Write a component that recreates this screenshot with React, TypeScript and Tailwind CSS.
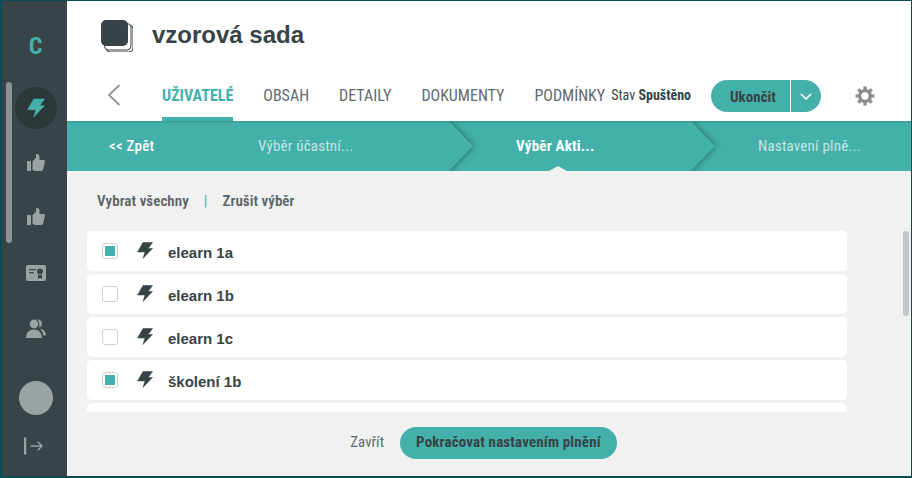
const Bolt = ({ className }: { className: string }) => (
  <svg viewBox="0 0 16 17" className={className} fill="currentColor" stroke="currentColor" strokeWidth="0.5" strokeLinejoin="round">
    <path d="M6 0.5 H15.5 L11.2 6.5 H15.5 L6 16.5 L8 10 H0.5 Z" />
  </svg>
);

const Thumb = () => (
  <svg viewBox="0 0 18 17" className="w-[18px] h-[17px]" fill="currentColor">
    <rect x="0" y="7" width="4" height="10" rx="0.5" />
    <path d="M5.5 7.5 L9 3.5 V0.6 Q9 0 10 0 Q12.5 0 12.5 3 V6 H17 Q18 6 18 7.5 L16 15.5 Q15.7 17 14 17 H8 L5.5 16 Z" />
  </svg>
);

const Certificate = () => (
  <svg viewBox="0 0 20 16" className="w-5 h-4" fill="currentColor">
    <path
      fillRule="evenodd"
      d="M2 0 H18 A2 2 0 0 1 20 2 V14 A2 2 0 0 1 18 16 H2 A2 2 0 0 1 0 14 V2 A2 2 0 0 1 2 0 Z M3 4 V5.2 H10 V4 Z M3 7 V8.2 H8 V7 Z M14 3.5 A3 3 0 1 0 14 9.5 A3 3 0 1 0 14 3.5 Z M12 10 V14 L14 13 L16 14 V10 Z"
    />
  </svg>
);

const Users = () => (
  <svg viewBox="0 0 20 19" className="w-5 h-[19px]" fill="currentColor">
    <circle cx="8" cy="5" r="4.4" />
    <path d="M0 19 Q0 10.5 8 10.5 Q15.5 10.5 16 19 Z" />
    <path d="M11.5 0.6 A3.6 3.6 0 0 1 15.8 4.6 A3.6 3.6 0 0 1 13 8.6 Q13.6 6 13.2 4 Q12.8 2 11.5 0.6 Z" />
    <path d="M14.2 9.8 Q19.6 10.5 20 16.5 H17.4 Q16.8 12.4 14.2 9.8 Z" />
  </svg>
);

const Gear = () => (
  <svg viewBox="0 0 20 20" className="ml-[34px] mt-[15px] w-[20px] h-[20px] text-[#8d8d8d]" fill="none" stroke="currentColor">
    <circle cx="10" cy="10" r="5.4" strokeWidth="3.4" />
    <path d="M10 0.5 V4 M10 16 V19.5 M0.5 10 H4 M16 10 H19.5 M3.3 3.3 L5.7 5.7 M14.3 14.3 L16.7 16.7 M16.7 3.3 L14.3 5.7 M5.7 14.3 L3.3 16.7" strokeWidth="3.2" />
  </svg>
);

const StepArrow = ({ className }: { className: string }) => (
  <svg className={`absolute top-0 w-[50px] h-[50px] ${className}`} viewBox="0 0 50 50">
    <path
      d="M-10 -1 L0 -1 L25 25 L0 51 L-10 51 Z"
      fill="#44b0aa"
      className="[filter:drop-shadow(1px_0_3px_rgba(10,60,60,0.55))]"
    />
  </svg>
);

const SideItem = ({ children, className }: { children: React.ReactNode; className: string }) => (
  <div className={`flex justify-center items-center text-[#9aa2a4] ${className}`}>{children}</div>
);

const Step = ({ label, className }: { label: string; className: string }) => (
  <span className={`relative text-[15px] tracking-[0.2px] ${className}`}>{label}</span>
);

const rows = [
  { name: "elearn 1a", checked: true },
  { name: "elearn 1b", checked: false },
  { name: "elearn 1c", checked: false },
  { name: "školení 1b", checked: true },
];

const tabs = ["OBSAH", "DETAILY", "DOKUMENTY", "PODMÍNKY"];

const condensed = "[font-family:Roboto,sans-serif] [font-stretch:75%]";

export default function App() {
  return (
    <div className="w-[912px] h-[478px] flex overflow-hidden border-t-[1px] border-b-[2px] border-l-[2px] border-r-[1px] border-[#0d4a57] bg-[#f1f1f1] font-['Liberation_Sans',sans-serif] text-[#374347]">
      {/* sidebar */}
      <aside className="relative w-[65px] shrink-0 bg-[#384548] flex flex-col">
        <div className="absolute left-[4px] top-[81px] w-[6px] h-[161px] rounded-full bg-[#8b9395]" />
        <div className="h-[33px]" />
        <div className={`h-[24px] flex justify-center items-center text-[#44b0aa] text-[24px] font-bold pl-[2px] ${condensed}`}>C</div>
        <div className="h-[29px]" />
        <div className="flex justify-center pl-[2px]">
          <div className="w-[42px] h-[42px] rounded-full bg-[#2c373a] flex items-center justify-center text-[#44b0aa]">
            <Bolt className="w-[18px] h-[20px]" />
          </div>
        </div>
        <SideItem className="mt-[24px] h-[18px] pl-[2px]"><Thumb /></SideItem>
        <SideItem className="mt-[36px] h-[18px] pl-[2px]"><Thumb /></SideItem>
        <SideItem className="mt-[39px] h-[18px] pl-[2px]"><Certificate /></SideItem>
        <SideItem className="mt-[36px] h-[20px] pl-[2px]"><Users /></SideItem>
        <div className="mt-[43px] flex justify-center pl-[2px]">
          <div className="w-[34px] h-[34px] rounded-full bg-[#9aa2a4]" />
        </div>
        <SideItem className="mt-[22px] h-[18px] pr-[3px]">
          <svg viewBox="0 0 20 18" className="w-[19px] h-[18px]" fill="none" stroke="currentColor" strokeWidth="1.6">
            <path d="M1.2 0 V18" strokeWidth="2.4" />
            <path d="M7 9 H19 M14.5 4.5 L19 9 L14.5 13.5" />
          </svg>
        </SideItem>
      </aside>

      <main className="flex-1 min-w-0 flex flex-col">
        {/* header */}
        <header className="bg-white h-[120px] shrink-0 flex flex-col">
          <div className="flex items-center pl-[34px] h-[70px]">
            <svg viewBox="0 0 32 32" className="w-[32px] h-[32px] shrink-0">
              <rect x="5" y="5" width="27" height="27" rx="4" fill="none" stroke="#374347" strokeWidth="1" />
              <rect x="3.5" y="3.5" width="26.5" height="26.5" rx="4" fill="#fff" stroke="#374347" strokeWidth="1" />
              <rect x="0" y="0" width="27" height="26" rx="5" fill="#374347" />
            </svg>
            <h1 className="ml-[19px] mb-[2px] text-[24px] font-bold leading-none text-[#374347]">vzorová sada</h1>
          </div>
          <div className="flex items-start pl-[40px] h-[50px]">
            <svg viewBox="0 0 14 22" className="w-[14px] h-[22px] mt-[13px] text-[#999]" fill="none" stroke="currentColor" strokeWidth="2">
              <path d="M12.5 1 L2 11 L12.5 21" />
            </svg>
            <nav className={`ml-[41px] flex gap-[30px] text-[16px] ${condensed}`}>
              <a className="h-[50px] pt-[13px] font-bold text-[#44b0aa] border-b-[4px] border-[#44b0aa]">UŽIVATELÉ</a>
              {tabs.map((t) => (
                <a key={t} className="pt-[13px] text-[#5f6b70]">{t}</a>
              ))}
            </nav>
            <div className={`ml-[6px] pt-[14px] text-[14px] ${condensed}`}>
              Stav <b className="font-bold">Spuštěno</b>
            </div>
            <div className="ml-[20px] mt-[9px] h-[32px] w-[110px] flex rounded-full bg-[#44b0aa] overflow-hidden">
              <span className={`w-[79px] pt-[2px] flex items-center justify-center pl-[5px] text-[15px] font-bold ${condensed}`}>Ukončit</span>
              <span className="w-[31px] border-l border-white flex items-center justify-center text-white">
                <svg viewBox="0 0 12 7" className="w-[12px] h-[7px]" fill="none" stroke="currentColor" strokeWidth="1.6">
                  <path d="M1 1 L6 6 L11 1" />
                </svg>
              </span>
            </div>
            <Gear />
          </div>
        </header>

        {/* wizard steps */}
        <div className={`relative h-[50px] shrink-0 bg-[#44b0aa] flex items-center overflow-hidden ${condensed}`}>
          <StepArrow className="left-[381px]" />
          <StepArrow className="left-[623px]" />
          <div className="absolute inset-x-0 top-0 h-[3px] bg-gradient-to-b from-[#2d8a85]/50 to-transparent" />
          <Step label="<< Zpět" className="ml-[42px] w-[149px] text-white font-medium" />
          <Step label="Výběr účastní..." className="w-[258px] text-[#c5e6e3]" />
          <Step label="Výběr Akti..." className="w-[242px] text-white font-bold" />
          <Step label="Nastavení plně..." className="text-[#c5e6e3]" />
          <div className="absolute left-[482px] bottom-0 w-0 h-0 border-x-[9px] border-x-transparent border-b-[5px] border-b-[#f1f1f1]" />
        </div>

        {/* content */}
        <div className="relative flex-1 min-h-0 flex flex-col">
          <div className={`flex items-center pl-[30px] pt-[19px] text-[15px] font-semibold text-[#5b6569] tracking-[0.05px] ${condensed}`}>
            <span>Vybrat všechny</span>
            <span className="mx-[15px] font-normal text-[#44b0aa]">|</span>
            <span>Zrušit výběr</span>
          </div>
          <div className="mt-[18px] ml-[20px] w-[760px] h-[181px] overflow-hidden flex flex-col gap-[3px]">
            {rows.map((r) => (
              <div key={r.name} className="h-[40px] shrink-0 bg-white rounded-[5px] flex items-center pl-[15px]">
                <span className="w-[16px] h-[16px] rounded-[3px] border border-[#cfcfcf] bg-white flex items-center justify-center shrink-0">
                  {r.checked && <span className="w-[10px] h-[10px] bg-[#44b0aa]" />}
                </span>
                <Bolt className="ml-[19px] w-[16px] h-[17px] text-[#374347]" />
                <span className="ml-[15px] mt-[5px] text-[15px] font-bold">{r.name}</span>
              </div>
            ))}
            <div className="h-[40px] shrink-0 bg-white rounded-[5px]" />
          </div>
          <div className="absolute right-[2px] top-[60px] w-[6px] h-[85px] rounded-full bg-[#c4c4c4]" />
          <div className={`flex items-center justify-center mt-[15px] pr-[7px] ${condensed}`}>
            <span className="text-[15px] text-[#5f6b70] mr-[16px] ml-[-4px]">Zavřít</span>
            <span className="h-[32px] px-[16px] rounded-full bg-[#44b0aa] flex items-center text-[15px] font-bold tracking-[0.15px]">Pokračovat nastavením plnění</span>
          </div>
        </div>
      </main>
    </div>
  );
}
